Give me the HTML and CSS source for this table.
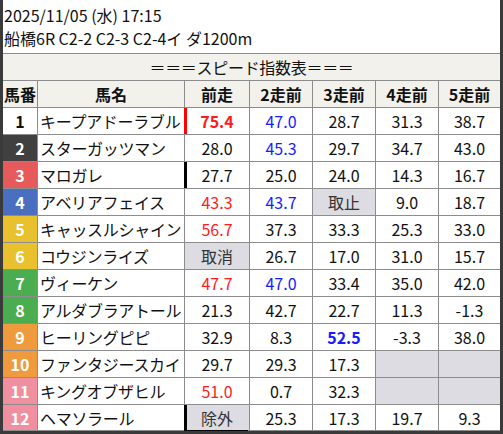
FILE: index.html
```html
<!DOCTYPE html>
<html lang="ja">
<head>
<meta charset="utf-8">
<link rel="stylesheet" href="styles.css">
</head>
<body>
<div class="frame">
  <div class="info">
    <div>2025/11/05 (水) 17:15</div>
    <div>船橋6R C2-2 C2-3 C2-4イ ダ1200m</div>
  </div>
  <div class="grid">
    <div class="title">＝＝＝スピード指数表＝＝＝</div>
    <div class="c h">馬番</div><div class="c h">馬名</div><div class="c h">前走</div><div class="c h">2走前</div><div class="c h">3走前</div><div class="c h">4走前</div><div class="c h">5走前</div>

    <div class="c no w1">1</div><div class="c name">キープアドーラブル</div><div class="c red bold barred">75.4</div><div class="c blue">47.0</div><div class="c">28.7</div><div class="c">31.3</div><div class="c">38.7</div>
    <div class="c no w2">2</div><div class="c name">スターガッツマン</div><div class="c">28.0</div><div class="c blue">45.3</div><div class="c">29.7</div><div class="c">34.7</div><div class="c">43.0</div>
    <div class="c no w3">3</div><div class="c name">マロガレ</div><div class="c barblack">27.7</div><div class="c">25.0</div><div class="c">24.0</div><div class="c">14.3</div><div class="c">16.7</div>
    <div class="c no w4">4</div><div class="c name">アベリアフェイス</div><div class="c red">43.3</div><div class="c blue">43.7</div><div class="c gray">取止</div><div class="c">9.0</div><div class="c">18.7</div>
    <div class="c no w5">5</div><div class="c name">キャッスルシャイン</div><div class="c red">56.7</div><div class="c">37.3</div><div class="c">33.3</div><div class="c">25.3</div><div class="c">33.0</div>
    <div class="c no w6">6</div><div class="c name">コウジンライズ</div><div class="c gray">取消</div><div class="c">26.7</div><div class="c">17.0</div><div class="c">31.0</div><div class="c">15.7</div>
    <div class="c no w7">7</div><div class="c name">ヴィーケン</div><div class="c red">47.7</div><div class="c blue">47.0</div><div class="c">33.4</div><div class="c">35.0</div><div class="c">42.0</div>
    <div class="c no w8">8</div><div class="c name">アルダブラアトール</div><div class="c">21.3</div><div class="c">42.7</div><div class="c">22.7</div><div class="c">11.3</div><div class="c">-1.3</div>
    <div class="c no w9">9</div><div class="c name">ヒーリングピピ</div><div class="c">32.9</div><div class="c">8.3</div><div class="c blue bold">52.5</div><div class="c">-3.3</div><div class="c">38.0</div>
    <div class="c no w10">10</div><div class="c name">ファンタジースカイ</div><div class="c">29.7</div><div class="c">29.3</div><div class="c">17.3</div><div class="c gray"></div><div class="c gray"></div>
    <div class="c no w11">11</div><div class="c name">キングオブザヒル</div><div class="c red">51.0</div><div class="c">0.7</div><div class="c">32.3</div><div class="c gray"></div><div class="c gray"></div>
    <div class="c no w12">12</div><div class="c name">ヘマソラール</div><div class="c gray barblack barlast">除外</div><div class="c">25.3</div><div class="c">17.3</div><div class="c">19.7</div><div class="c">9.3</div>
  </div>
</div>
</body>
</html>
```

FILE: styles.css
```css
html, body {
  margin: 0;
  padding: 0;
  background: #ffffff;
}

.frame {
  width: 503px;
  height: 434px;
  box-sizing: border-box;
  border-left: 3px solid #3a3a3a;
  border-right: 3px solid #3a3a3a;
  border-bottom: 3px solid #3a3a3a;
  font-family: "Noto Sans CJK JP", "Noto Sans", sans-serif;
  font-size: 16px;
  color: #111111;
  display: flex;
  flex-direction: column;
}

.info {
  height: 53px;
  box-sizing: border-box;
  padding: 4px 0 0 1px;
  line-height: 23px;
  background: #ffffff;
}

.grid {
  display: grid;
  grid-template-columns: 34px 146px 64px 62px 62px 62px 61px;
  grid-template-rows: 26px 26px repeat(11, 26px) 25px;
  gap: 1px;
  padding: 1px 0;
  background: #8c8c8c;
}

.title {
  grid-column: 1 / -1;
  background: #f2f1ec;
  display: flex;
  align-items: center;
  justify-content: center;
  letter-spacing: -0.3px;
}

.c {
  background: #ffffff;
  display: flex;
  align-items: center;
  justify-content: center;
  line-height: 1;
  white-space: nowrap;
  overflow: hidden;
}

.h {
  background: #f2f1ec;
  font-weight: bold;
}

.name {
  justify-content: flex-start;
  padding-left: 2px;
  letter-spacing: -0.3px;
  overflow: visible;
}

.no {
  font-weight: bold;
  color: #ffffff;
}

.w1 { background: #ffffff; color: #111111; }
.w2 { background: #404040; }
.w3 { background: #e65a5c; }
.w4 { background: #4a6fc1; }
.w5, .w6 { background: #e9c12f; }
.w7, .w8 { background: #4aad50; }
.w9, .w10 { background: #f09a3e; }
.w11, .w12 { background: #f08f9f; }

.red { color: #ff1a1a; }
.blue { color: #1a1aff; }
.bold { font-weight: bold; }

.gray {
  background: #dcdce2;
  color: #333333;
}

.barred {
  box-shadow: -1px 0 0 #ff0000, inset 2px 0 0 #ff0000;
}

.barblack {
  box-shadow: -1px 0 0 #000000, inset 2px 0 0 #000000;
}

.barlast {
  box-shadow: -1px 0 0 #000000, inset 2px 0 0 #000000, -1px 1px 0 #000000;
}
```
